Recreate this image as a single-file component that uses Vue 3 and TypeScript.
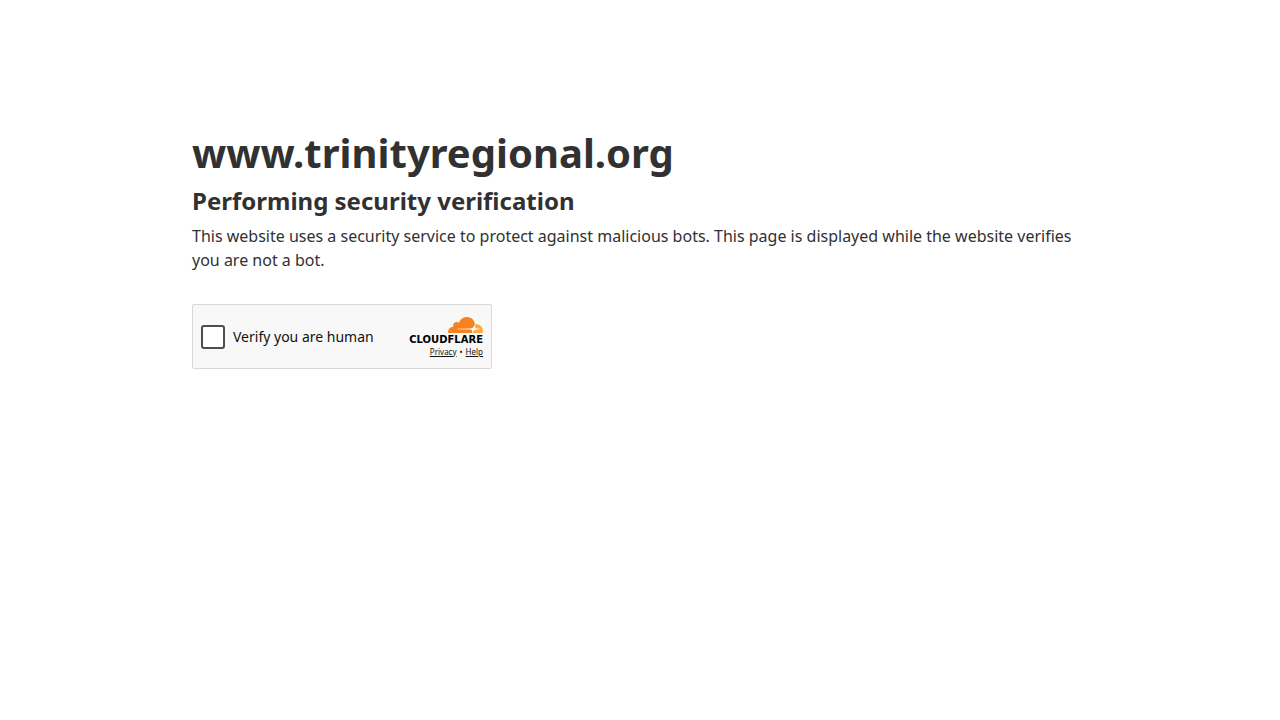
<script setup lang="ts">
import { ref } from 'vue'

const host = 'www.trinityregional.org'
const verified = ref(false)
</script>

<template>
  <main class="content">
    <h1>{{ host }}</h1>
    <h2>Performing security verification</h2>
    <p class="lead">
      This website uses a security service to protect against malicious bots. This page is
      displayed while the website verifies you are not a bot.
    </p>
    <div class="widget">
      <label class="check">
        <input v-model="verified" type="checkbox" />
        <span>Verify you are human</span>
      </label>
      <div class="brand">
        <svg class="cloud" viewBox="38 0 35 16" aria-hidden="true">
          <path
            fill="#f6821f"
            d="M61.88 15.78L62.06 15.16C62.28 14.41 62.2 13.72 61.84 13.22C61.51 12.75 60.96 12.48 60.3 12.45L47.72 12.28C47.64 12.28 47.57 12.24 47.52 12.18C47.48 12.11 47.47 12.02 47.49 11.95C47.53 11.82 47.65 11.73 47.79 11.72L60.48 11.56C61.99 11.49 63.62 10.25 64.19 8.73L64.91 6.81C64.94 6.73 64.95 6.64 64.93 6.56C64.11 2.81 60.81 0 56.87 0C53.23 0 50.14 2.38 49.03 5.69C48.29 5.12 47.35 4.86 46.42 4.96C44.68 5.13 43.28 6.56 43.1 8.33C43.06 8.77 43.09 9.22 43.2 9.65C40.35 9.73 38.06 12.1 38.06 15.02C38.06 15.28 38.08 15.53 38.12 15.79C38.14 15.92 38.24 16 38.36 16H61.6C61.73 16 61.84 15.91 61.88 15.78Z"
          />
          <path
            fill="#fbad41"
            d="M66.08 6.95L65.73 6.96C65.64 6.97 65.57 7.02 65.55 7.11L65.05 8.84C64.84 9.59 64.92 10.28 65.27 10.78C65.6 11.25 66.15 11.52 66.81 11.56L69.5 11.72C69.57 11.72 69.64 11.76 69.68 11.82C69.73 11.89 69.74 11.98 69.71 12.06C69.67 12.18 69.55 12.27 69.42 12.28L66.63 12.45C65.12 12.52 63.49 13.76 62.92 15.27L62.72 15.8C62.68 15.9 62.75 16 62.86 16H72.44C72.56 16 72.65 15.93 72.69 15.82C72.86 15.2 72.95 14.57 72.95 13.93C72.95 10.08 69.87 6.95 66.08 6.95Z"
          />
        </svg>
        <span class="wordmark">CLOUDFLARE</span>
        <div class="links"><a href="#privacy">Privacy</a><span class="dot">•</span><a href="#help">Help</a></div>
      </div>
    </div>
  </main>
</template>

<style>
body {
  margin: 0;
  background: #fff;
}
</style>

<style scoped>
.content {
  box-sizing: border-box;
  max-width: 960px;
  margin: 0 auto;
  padding: 128px 32px 32px;
  color: #313131;
  font-family: "Noto Sans", sans-serif;
}
h1 {
  margin: 0;
  font-size: 40px;
  font-weight: 700;
  line-height: 50px;
}
h2 {
  margin: 5px 0;
  font-size: 24px;
  font-weight: 700;
  line-height: 36px;
}
h1,
h2 {
  font-family: system-ui, "Noto Sans", sans-serif;
}
.lead {
  margin: 0 0 32px;
  font-size: 16px;
  line-height: 24px;
}
.widget {
  box-sizing: border-box;
  display: flex;
  align-items: center;
  justify-content: space-between;
  max-width: 300px;
  min-height: 65px;
  padding: 0 8px;
  border: 1px solid #d9d9d9;
  border-radius: 2px;
  background: #f8f8f8;
  color: #111;
}
.check {
  display: flex;
  align-items: center;
  gap: 8px;
  font-size: 14px;
  line-height: 20px;
  cursor: pointer;
}
.check input {
  appearance: none;
  box-sizing: border-box;
  width: 24px;
  height: 24px;
  margin: 0;
  border: 2px solid #4d4d4d;
  border-radius: 3px;
  background: #fff;
}
.check input:checked {
  background: #4d4d4d;
}
.brand {
  display: flex;
  flex-direction: column;
  align-items: flex-end;
}
.cloud {
  width: 35px;
  height: 16px;
}
.wordmark {
  color: #000;
  font-family: "DejaVu Sans", sans-serif;
  font-size: 10px;
  font-weight: 700;
  line-height: 14px;
}
.links {
  display: flex;
  font-size: 8px;
  line-height: 10px;
}
.links a {
  color: inherit;
  text-decoration: underline;
}
.dot {
  margin: 0 3px;
}
</style>
